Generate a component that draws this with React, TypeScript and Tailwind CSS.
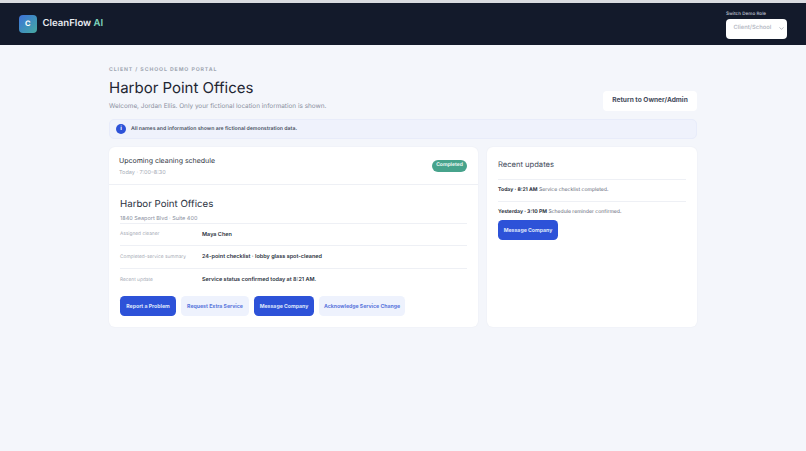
import { ChevronDown } from 'lucide-react';

function Row({ label, value, last }: { label: string; value: string; last?: boolean }) {
  return (
    <div className={`flex h-[22.5px] items-center pt-[1px] ${last ? '' : 'border-b border-[#eef0f5]'}`}>
      <span className="w-[82px] shrink-0 whitespace-nowrap text-[4.8px] text-[#a4a9b4]">{label}</span>
      <span className="text-[5.5px] font-semibold text-[#2b3240]">{value}</span>
    </div>
  );
}

function Btn({ children, primary, w }: { children: string; primary?: boolean; w: string }) {
  return (
    <button
      type="button"
      className={`flex h-5 items-center justify-center whitespace-nowrap rounded-[4.5px] pt-[1px] text-[5.2px] font-bold ${w} ${
        primary ? 'bg-[#2d52d8] text-[#dfe6fb]' : 'bg-[#eef2fd] text-[#5b77dc]'
      }`}
    >
      {children}
    </button>
  );
}

export default function App() {
  return (
    <div className="min-h-[451px] bg-[#f4f6fb] font-['Inter',sans-serif] text-[#1f2633] [text-rendering:geometricPrecision]">
      <div className="h-[2.5px] bg-[#d9dbe0]" />
      <header className="flex h-[42.5px] items-center justify-between bg-[#131a2b] pl-[19px] pr-[19px]">
        <div className="flex items-center gap-[6px]">
          <div className="flex h-[17.5px] w-[17.5px] items-center justify-center rounded-[4px] bg-gradient-to-br from-[#3f6fd8] to-[#48a9a0] text-[7.5px] font-bold text-white">
            C
          </div>
          <span className="text-[9.6px] font-semibold text-[#e8ebf1]">
            CleanFlow <span className="text-[#7fd6bd]">AI</span>
          </span>
        </div>
        <div className="mt-[1px] flex w-[61px] flex-col">
          <span className="mb-[1px] whitespace-nowrap pt-[2px] text-[4.6px] font-semibold leading-[6px] text-[#aeb4c0]">Switch Demo Role</span>
          <div className="flex h-[19.5px] items-center justify-between rounded-[4px] bg-white pl-[7.5px] pr-[2px]">
            <span className="text-[5.8px] font-semibold text-[#b8bcc6]">Client/School</span>
            <ChevronDown size={7} className="text-[#8b91a0]" />
          </div>
        </div>
      </header>

      <main className="mx-auto w-[588px] pt-[21px]">
        <div className="flex items-end justify-between">
          <div>
            <p className="pt-[1px] text-[5.2px] font-bold uppercase leading-[6px] tracking-[0.9px] text-[#a0a6b2]">
              Client / School Demo Portal
            </p>
            <h1 className="mt-[3px] text-[15px] font-normal leading-[24px] text-[#1f2633]">Harbor Point Offices</h1>
            <p className="mt-[1px] text-[6.42px] leading-[10px] text-[#8a90a0]">
              Welcome, Jordan Ellis. Only your fictional location information is shown.
            </p>
          </div>
          <button
            type="button"
            className="h-[20px] w-[94px] rounded-[4px] bg-white text-[6.6px] font-bold text-[#454c5c]"
          >
            Return to Owner/Admin
          </button>
        </div>

        <div className="mt-[8px] flex h-[19.5px] items-center gap-[5px] rounded-[5px] border border-[#e8ecfa] bg-[#eff2fc] pl-[6px]">
          <span className="flex h-[10px] w-[10px] items-center justify-center rounded-full bg-[#2d52d8] text-[6px] font-bold text-white">
            i
          </span>
          <span className="pt-[2px] text-[5.2px] font-semibold text-[#4a5263]">
            All names and information shown are fictional demonstration data.
          </span>
        </div>

        <div className="mt-[8.5px] flex gap-[9px]">
          <section className="h-[180px] w-[369px] rounded-[6px] bg-white shadow-[0_0_2px_rgba(30,40,80,0.05)]">
            <div className="flex h-[38px] items-center justify-between border-b border-[#eef0f5] pl-[10px] pr-[11px]">
              <div>
                <p className="text-[7px] leading-[11px] text-[#2f3644]">Upcoming cleaning schedule</p>
                <p className="mt-[3px] text-[5.5px] leading-[8px] text-[#a6abb6]">Today · 7:00–8:30</p>
              </div>
              <span className="flex h-[12px] w-[35px] items-center justify-center rounded-full bg-[#47a38c] pt-[1px] text-[5px] font-bold text-[#e9f7f2]">
                Completed
              </span>
            </div>
            <div className="px-[11px] pt-[11.5px]">
              <h2 className="text-[9.7px] font-normal leading-[15px] text-[#2a3140]">Harbor Point Offices</h2>
              <p className="mt-[3px] text-[5.5px] leading-[8px] text-[#8a90a0]">1840 Seaport Blvd · Suite 400</p>
              <div className="border-t border-[#eef0f5]">
                <Row label="Assigned cleaner" value="Maya Chen" />
                <Row label="Completed-service summary" value="24-point checklist · lobby glass spot-cleaned" />
                <Row label="Recent update" value="Service status confirmed today at 8:21 AM." last />
              </div>
              <div className="mt-[5px] flex gap-[5px]">
                <Btn primary w="w-[56px]">Report a Problem</Btn>
                <Btn w="w-[68px]">Request Extra Service</Btn>
                <Btn primary w="w-[60px]">Message Company</Btn>
                <Btn w="w-[86px]">Acknowledge Service Change</Btn>
              </div>
            </div>
          </section>

          <section className="h-[180px] w-[210px] rounded-[6px] bg-white px-[11px] pt-[11px] shadow-[0_0_2px_rgba(30,40,80,0.05)]">
            <h3 className="border-b border-[#eef0f5] pb-[7.5px] text-[7.6px] leading-[13px] text-[#454c5c]">Recent updates</h3>
            <p className="border-b border-[#eef0f5] py-[7.5px] text-[5.1px] leading-[6px] text-[#5d6474]">
              <b className="font-bold text-[#2b3240]">Today · 8:21 AM</b> Service checklist completed.
            </p>
            <p className="pb-[5.5px] pt-[7px] text-[5.1px] leading-[6px] text-[#5d6474]">
              <b className="font-bold text-[#2b3240]">Yesterday · 3:10 PM</b> Schedule reminder confirmed.
            </p>
            <Btn primary w="w-[60px]">Message Company</Btn>
          </section>
        </div>
      </main>
    </div>
  );
}
